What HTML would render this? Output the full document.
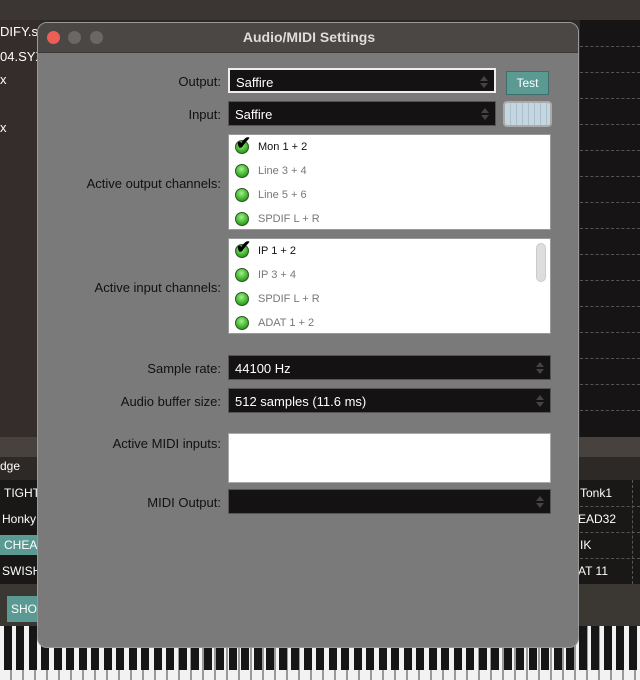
<!DOCTYPE html>
<html><head><style>
*{margin:0;padding:0;box-sizing:border-box}
body{width:640px;height:680px;overflow:hidden;background:#2e2927;font-family:"Liberation Sans",sans-serif;position:relative}
.a{position:absolute}
.lbl{position:absolute;right:419px;font-size:13px;color:#111;text-align:right;white-space:nowrap}
.combo{position:absolute;left:228px;width:323px;height:25px;background:#141213;border:1px solid #555;color:#fff;font-size:13px;padding:5px 6px}
.arr{position:absolute;right:6px;top:6px;width:8px;height:12px}
.arr:before,.arr:after{content:"";position:absolute;left:0;border-left:4px solid transparent;border-right:4px solid transparent}
.arr:before{top:0;border-bottom:5px solid #444}
.arr:after{bottom:0;border-top:5px solid #444}
.list{position:absolute;left:228px;width:323px;height:96px;background:#fff;border:1px solid #999}
.it{position:absolute;left:6px;height:24px;font-size:11px;color:#777;padding-left:23px;line-height:24px}
.it.on{color:#111}
.dot{position:absolute;left:0;top:5px;width:14px;height:14px;border-radius:50%;background:radial-gradient(circle at 45% 35%,#9ef28a,#3fae2c 60%,#1e6a14);border:1px solid #2a5a20}
.chk{position:absolute;left:1px;top:-4px;font-size:18px;color:#000;font-weight:bold}
.rowtxt{position:absolute;color:#fff;font-size:12px}
.dl{position:absolute;left:580px;width:60px;border-top:1px dashed #555}
</style></head><body>
<div class="a" style="left:0;top:0;width:640px;height:20px;background:#3b3633"></div>
<div class="a" style="left:0;top:20px;width:40px;height:417px;background:#352d2b"></div>
<div class="a" style="left:0;top:24px;color:#fff;font-size:13px">DIFY.sy</div>
<div class="a" style="left:0;top:49px;color:#fff;font-size:13px">04.SYX</div>
<div class="a" style="left:0;top:72px;color:#fff;font-size:13px">x</div>
<div class="a" style="left:0;top:120px;color:#fff;font-size:13px">x</div>
<div class="a" style="left:580px;top:20px;width:60px;height:417px;background:#161414"></div>
<div class="dl" style="top:46px"></div><div class="dl" style="top:72px"></div><div class="dl" style="top:98px"></div><div class="dl" style="top:124px"></div><div class="dl" style="top:150px"></div><div class="dl" style="top:176px"></div><div class="dl" style="top:202px"></div><div class="dl" style="top:228px"></div><div class="dl" style="top:254px"></div><div class="dl" style="top:280px"></div><div class="dl" style="top:306px"></div><div class="dl" style="top:332px"></div><div class="dl" style="top:358px"></div><div class="dl" style="top:384px"></div><div class="dl" style="top:410px"></div>
<div class="a" style="left:0;top:437px;width:640px;height:20px;background:#47423d"></div>
<div class="a" style="left:0;top:457px;width:640px;height:23px;background:#2d2927"></div>
<div class="a" style="left:0;top:459px;color:#fff;font-size:12px">dge</div>
<div class="a" style="left:0;top:480px;width:640px;height:104px;background:#1a1717"></div>
<div class="dl" style="top:506px"></div><div class="dl" style="top:532px"></div><div class="dl" style="top:558px"></div>
<div class="a" style="left:632px;top:480px;height:104px;border-left:1px dashed #555"></div>
<div class="rowtxt" style="left:4px;top:486px">TIGHT</div>
<div class="rowtxt" style="left:2px;top:512px">Honky</div>
<div class="a" style="left:0;top:535px;width:40px;height:20px;background:#5a9a93;color:#fff;font-size:12px;padding:3px 4px">CHEA</div>
<div class="rowtxt" style="left:2px;top:564px">SWISH</div>
<div class="rowtxt" style="left:580px;top:486px">Tonk1</div>
<div class="rowtxt" style="left:578px;top:512px">EAD32</div>
<div class="rowtxt" style="left:580px;top:538px">IK</div>
<div class="rowtxt" style="left:578px;top:564px">AT 11</div>
<div class="a" style="left:0;top:584px;width:640px;height:42px;background:#3b3733"></div>
<div class="a" style="left:7px;top:596px;width:34px;height:26px;background:#5a9a93;color:#fff;font-size:12px;padding:6px 4px">SHO</div>
<div class="a" style="left:0;top:626px;width:640px;height:54px;background:repeating-linear-gradient(90deg,#f2f2f2 0 10px,#999 10px 12px)"></div>
<div class="a" style="left:0;top:626px;width:640px;height:44px;background:repeating-linear-gradient(90deg,transparent 0 4px,#161616 4px 12px,transparent 12px 16px,#161616 16px 24px,transparent 24px 25px)"></div>

<div class="a" style="left:37px;top:22px;width:542px;height:626px;background:#7a7a7a;border-radius:10px;border:1px solid #999;overflow:hidden">
 <div class="a" style="left:0;top:0;width:542px;height:30px;background:#4a4745;border-bottom:1px solid #3a3836"></div>
 <div class="a" style="left:9px;top:8px;width:13px;height:13px;border-radius:50%;background:#ec5f57"></div>
 <div class="a" style="left:30px;top:8px;width:13px;height:13px;border-radius:50%;background:#6a6866"></div>
 <div class="a" style="left:52px;top:8px;width:13px;height:13px;border-radius:50%;background:#6a6866"></div>
 <div class="a" style="left:0;top:6px;width:542px;text-align:center;color:#ddd;font-weight:bold;font-size:14px">Audio/MIDI Settings</div>
</div>

<div class="lbl" style="top:74px">Output:</div>
<div class="combo" style="top:68px;width:268px;border:2px solid #eee">Saffire<span class="arr"></span></div>
<div class="a" style="left:506px;top:71px;width:43px;height:24px;background:#5a9a93;border:1px solid #3e6e69;color:#fff;font-size:12px;text-align:center;line-height:22px">Test</div>
<div class="lbl" style="top:107px">Input:</div>
<div class="combo" style="top:101px;width:268px">Saffire<span class="arr"></span></div>
<div class="a" style="left:503px;top:101px;width:49px;height:26px;border-radius:4px;border:2px solid #aaa;background:repeating-linear-gradient(90deg,#c3d6e2 0 5px,#aebfca 5px 6px)"></div>

<div class="lbl" style="top:176px">Active output channels:</div>
<div class="list" style="top:134px">
 <div class="it on" style="top:0"><span class="dot"></span><span class="chk">✔</span>Mon 1 + 2</div>
 <div class="it" style="top:24px"><span class="dot"></span>Line 3 + 4</div>
 <div class="it" style="top:48px"><span class="dot"></span>Line 5 + 6</div>
 <div class="it" style="top:72px"><span class="dot"></span>SPDIF L + R</div>
</div>
<div class="lbl" style="top:280px">Active input channels:</div>
<div class="list" style="top:238px">
 <div class="it on" style="top:0"><span class="dot"></span><span class="chk">✔</span>IP 1 + 2</div>
 <div class="it" style="top:24px"><span class="dot"></span>IP 3 + 4</div>
 <div class="it" style="top:48px"><span class="dot"></span>SPDIF L + R</div>
 <div class="it" style="top:72px"><span class="dot"></span>ADAT 1 + 2</div>
 <div class="a" style="left:307px;top:4px;width:10px;height:39px;border-radius:5px;background:#ddd;border:1px solid #ccc"></div>
</div>
<div class="lbl" style="top:361px">Sample rate:</div>
<div class="combo" style="top:355px">44100 Hz<span class="arr"></span></div>
<div class="lbl" style="top:394px">Audio buffer size:</div>
<div class="combo" style="top:388px">512 samples (11.6 ms)<span class="arr"></span></div>
<div class="lbl" style="top:436px">Active MIDI inputs:</div>
<div class="a" style="left:228px;top:433px;width:323px;height:50px;background:#fff;border:1px solid #aaa"></div>
<div class="lbl" style="top:495px">MIDI Output:</div>
<div class="combo" style="top:489px"><span class="arr"></span></div>
</body></html>
